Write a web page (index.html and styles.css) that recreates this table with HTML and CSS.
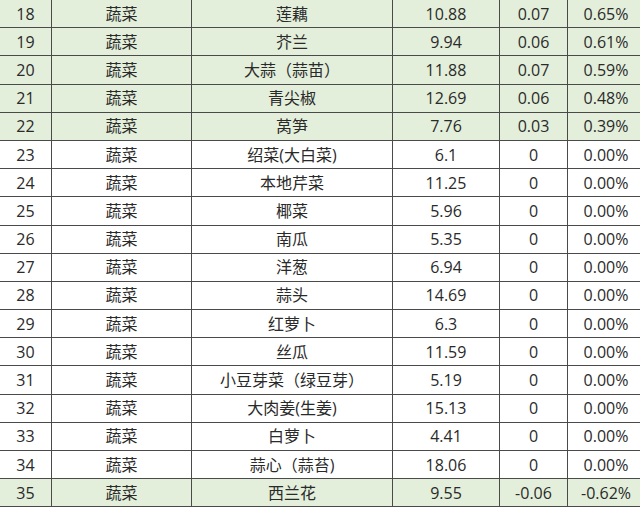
FILE: index.html
```html
<!DOCTYPE html>
<html lang="zh">
<head>
<meta charset="utf-8">
<link rel="stylesheet" href="styles.css">
</head>
<body>
<table class="price-table">
<colgroup>
<col class="c-no"><col class="c-cat"><col class="c-name"><col class="c-price"><col class="c-chg"><col class="c-pct">
</colgroup>
<tbody>
<tr class="up"><td>18</td><td>蔬菜</td><td>莲藕</td><td>10.88</td><td>0.07</td><td>0.65%</td></tr>
<tr class="up"><td>19</td><td>蔬菜</td><td>芥兰</td><td>9.94</td><td>0.06</td><td>0.61%</td></tr>
<tr class="up"><td>20</td><td>蔬菜</td><td>大蒜（蒜苗）</td><td>11.88</td><td>0.07</td><td>0.59%</td></tr>
<tr class="up"><td>21</td><td>蔬菜</td><td>青尖椒</td><td>12.69</td><td>0.06</td><td>0.48%</td></tr>
<tr class="up"><td>22</td><td>蔬菜</td><td>莴笋</td><td>7.76</td><td>0.03</td><td>0.39%</td></tr>
<tr><td>23</td><td>蔬菜</td><td>绍菜(大白菜)</td><td>6.1</td><td>0</td><td>0.00%</td></tr>
<tr><td>24</td><td>蔬菜</td><td>本地芹菜</td><td>11.25</td><td>0</td><td>0.00%</td></tr>
<tr><td>25</td><td>蔬菜</td><td>椰菜</td><td>5.96</td><td>0</td><td>0.00%</td></tr>
<tr><td>26</td><td>蔬菜</td><td>南瓜</td><td>5.35</td><td>0</td><td>0.00%</td></tr>
<tr><td>27</td><td>蔬菜</td><td>洋葱</td><td>6.94</td><td>0</td><td>0.00%</td></tr>
<tr><td>28</td><td>蔬菜</td><td>蒜头</td><td>14.69</td><td>0</td><td>0.00%</td></tr>
<tr><td>29</td><td>蔬菜</td><td>红萝卜</td><td>6.3</td><td>0</td><td>0.00%</td></tr>
<tr><td>30</td><td>蔬菜</td><td>丝瓜</td><td>11.59</td><td>0</td><td>0.00%</td></tr>
<tr><td>31</td><td>蔬菜</td><td>小豆芽菜（绿豆芽）</td><td>5.19</td><td>0</td><td>0.00%</td></tr>
<tr><td>32</td><td>蔬菜</td><td>大肉姜(生姜)</td><td>15.13</td><td>0</td><td>0.00%</td></tr>
<tr><td>33</td><td>蔬菜</td><td>白萝卜</td><td>4.41</td><td>0</td><td>0.00%</td></tr>
<tr><td>34</td><td>蔬菜</td><td>蒜心（蒜苔)</td><td>18.06</td><td>0</td><td>0.00%</td></tr>
<tr class="up"><td>35</td><td>蔬菜</td><td>西兰花</td><td>9.55</td><td>-0.06</td><td>-0.62%</td></tr>
</tbody>
</table>
</body>
</html>
```

FILE: styles.css
```css
html, body {
  margin: 0;
  padding: 0;
  background: #ffffff;
  overflow: hidden;
  width: 640px;
  height: 508px;
}

.price-table {
  border-collapse: collapse;
  table-layout: fixed;
  width: 645px;
  margin: -1px 0 0 -1px;
  font-family: "Open Sans", "Noto Sans CJK SC", sans-serif;
  font-size: 16px;
  color: #2a2a2a;
}

.c-no { width: 52px; }
.c-cat { width: 140px; }
.c-name { width: 201px; }
.c-price { width: 107px; }
.c-chg { width: 68px; }
.c-pct { width: 77px; }

.price-table tr {
  height: 28.2px;
}

.price-table td {
  border: 1px solid #4a4a4a;
  padding: 0;
  text-align: center;
  vertical-align: middle;
  line-height: 20px;
  white-space: nowrap;
  overflow: hidden;
}

.price-table tr.up td {
  background: #e3efda;
}
```
